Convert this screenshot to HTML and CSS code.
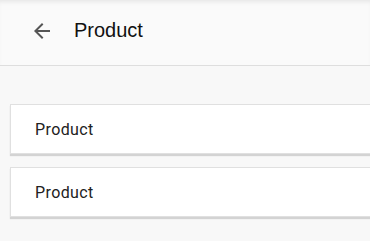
FILE: index.html
```html
<!DOCTYPE html>
<html>
<head>
<meta charset="utf-8">
<link rel="stylesheet" href="styles.css">
</head>
<body>
<header class="topbar">
  <button class="back" aria-label="Back">
    <svg width="24" height="24" viewBox="0 0 24 24"><path d="M20 11H7.83l5.59-5.59L12 4l-8 8 8 8 1.41-1.41L7.83 13H20v-2z" fill="#555"/></svg>
  </button>
  <h1 class="title">Product</h1>
</header>
<main class="list">
  <div class="card">Product</div>
  <div class="card">Product</div>
</main>
</body>
</html>
```
FILE: styles.css
```css
html, body {
  margin: 0;
  padding: 0;
  background: #f8f8f8;
  overflow: hidden;
  height: 100%;
}
body {
  font-family: Roboto, "Liberation Sans", sans-serif;
}
.topbar {
  height: 66px;
  background: #fafafa;
  border-bottom: 1px solid #dedede;
  display: flex;
  align-items: center;
  padding-left: 30px;
  box-shadow: inset 0 4px 4px -2px rgba(0,0,0,0.08);
  box-sizing: border-box;
}
.back {
  background: none;
  border: 0;
  padding: 0;
  width: 24px;
  height: 24px;
  display: flex;
  margin-top: -3px;
}
.title {
  margin: 0 0 0 20px;
  font-family: "Liberation Sans", Arial, sans-serif;
  font-weight: normal;
  font-size: 20px;
  color: #111;
  margin-top: -4px;
}
.list {
  padding: 38px 0 0 10px;
  display: flex;
  flex-direction: column;
  gap: 13px;
}
.card {
  height: 48px;
  background: #fff;
  border: 1px solid #e0e0e0;
  border-right: 0;
  box-shadow: 0 2px 1px rgba(0,0,0,0.15);
  display: flex;
  align-items: center;
  padding-left: 24px;
  font-size: 16px;
  letter-spacing: 0.4px;
  color: #212121;
}
```
